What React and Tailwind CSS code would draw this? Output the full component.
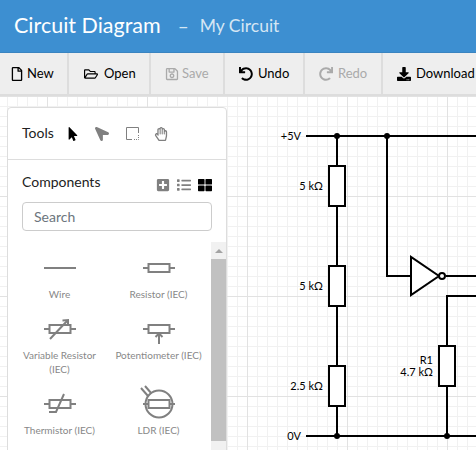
import { FaRegFile, FaRegFolderOpen, FaRegSave, FaUndo, FaRedo, FaDownload, FaMousePointer, FaLocationArrow, FaRegHandPaper, FaPlusSquare, FaList, FaThLarge } from 'react-icons/fa'

const buttons = [
  { label: 'New', icon: FaRegFile, w: 'w-[69px] pl-[10px] gap-[3px]' },
  { label: 'Open', icon: FaRegFolderOpen, w: 'w-[82px] pl-[15px] gap-[6px]' },
  { label: 'Save', icon: FaRegSave, w: 'w-[74px] pl-[14px] gap-[3px]', off: true },
  { label: 'Undo', icon: FaUndo, w: 'w-[80px] pl-[14px] gap-[5px]' },
  { label: 'Redo', icon: FaRedo, w: 'w-[78px] pl-[14px] gap-[5px]', off: true },
  { label: 'Download', icon: FaDownload, w: 'w-[93px] pl-[14px] gap-[5px]', last: true },
]

function Symbol({ children }) {
  return (
    <svg width="48" height="40" viewBox="-24 -20 48 40" fill="none" stroke="#808080" strokeWidth="2">
      {children}
    </svg>
  )
}

const Body = () => (
  <>
    <path d="M-16 0H-10.5M10.5 0H16" />
    <rect x="-10.5" y="-4" width="21" height="8" />
  </>
)

const items = [
  { name: 'Wire', draw: <path d="M-16 0H16" /> },
  { name: 'Resistor (IEC)', draw: <Body /> },
  {
    name: 'Variable Resistor (IEC)',
    draw: (
      <>
        <Body />
        <path d="M-10 10L7 -8" />
        <path d="M2.5 -8.5L8 -9L8 -3.5" />
      </>
    ),
  },
  {
    name: 'Potentiometer (IEC)',
    draw: (
      <>
        <Body />
        <path d="M0 5V15M-3.5 8L0 4.5L3.5 8" />
      </>
    ),
  },
  {
    name: 'Thermistor (IEC)',
    draw: (
      <>
        <Body />
        <path d="M-11 8H-4L4 -10" />
      </>
    ),
  },
  {
    name: 'LDR (IEC)',
    draw: (
      <>
        <Body />
        <circle cx="0" cy="0" r="13.5" />
        <path d="M-11 -8L-18 -16M-7.5 -10.5L-14 -18" />
      </>
    ),
  },
]

function Wires() {
  return (
    <svg className="absolute inset-0" width="476" height="354" viewBox="0 96 476 354" fill="none">
      <defs>
        <pattern id="minor" x="7" y="96" width="10" height="10" patternUnits="userSpaceOnUse">
          <path d="M0.5 0V10M0 0.5H10" stroke="#f1f1f1" strokeWidth="1" />
        </pattern>
        <pattern id="major" x="47" y="96" width="100" height="100" patternUnits="userSpaceOnUse">
          <path d="M0.5 0V100M0 0.5H100" stroke="#e2e2e2" strokeWidth="1" />
        </pattern>
      </defs>
      <rect x="0" y="96" width="476" height="354" fill="url(#minor)" />
      <rect x="0" y="96" width="476" height="354" fill="url(#major)" />
      <g stroke="#000000" strokeWidth="2">
        <path d="M306 136H476M306 436H476" />
        <path d="M337 136V166M337 206V266M337 306V366M337 406V436" />
        <rect x="329" y="166" width="16" height="40" fill="#ffffff" />
        <rect x="329" y="266" width="16" height="40" fill="#ffffff" />
        <rect x="329" y="366" width="16" height="40" fill="#ffffff" />
        <path d="M387 136V276H411M446 276H476" />
        <path d="M411 257V295L439 276Z" fill="#ffffff" />
        <circle cx="442" cy="276" r="3" fill="#ffffff" />
        <path d="M476 296H447V346M447 386V436" />
        <rect x="439" y="346" width="16" height="40" fill="#ffffff" />
      </g>
      <g fill="#000000">
        <circle cx="337" cy="136" r="3" />
        <circle cx="387" cy="136" r="3" />
        <circle cx="337" cy="436" r="3" />
        <circle cx="447" cy="436" r="3" />
      </g>
      <g fill="#000000" fontSize="11" textAnchor="end" fontFamily="Lato, sans-serif">
        <text x="301" y="140">+5V</text>
        <text x="301" y="440">0V</text>
        <text x="323" y="190">5 kΩ</text>
        <text x="323" y="290">5 kΩ</text>
        <text x="323" y="390">2.5 kΩ</text>
        <text x="433" y="364">R1</text>
        <text x="433" y="376">4.7 kΩ</text>
      </g>
    </svg>
  )
}

export default function App() {
  return (
    <div className="h-[450px] w-[476px] overflow-hidden bg-white font-['Lato',sans-serif] text-black">
      <header className="flex h-[53px] items-center border-b border-[#3a84c0] bg-[#3d8fd1] pl-[14px] text-white">
        <h1 className="text-[21.5px] leading-none">Circuit Diagram</h1>
        <span className="ml-[17px] text-[19px] text-[#d5e6f4]">–</span>
        <span className="ml-[11px] text-[17.5px] text-[#d5e6f4]">My Circuit</span>
      </header>

      <div className="flex h-[43px] border-b-2 border-[#dddddd] bg-[#eeeeee] text-[13px]">
        {buttons.map(b => {
          const Icon = b.icon
          return (
            <div
              key={b.label}
              className={`flex shrink-0 items-center ${b.w} ${b.last ? '' : 'border-r-2 border-[#dddddd]'} ${b.off ? 'text-[#aaaaaa]' : ''}`}
            >
              <Icon className="text-[14px]" />
              {b.label}
            </div>
          )
        })}
      </div>

      <main className="relative h-[354px] pt-[11px]">
        <Wires />
        <aside className="relative ml-[7px] w-[220px] rounded border border-[#dddddd] bg-white">
          <div className="flex h-[52px] items-center border-b border-[#dddddd] pl-[14px]">
            <span className="pb-[2px] text-[14px] text-[#222222]">Tools</span>
            <FaMousePointer className="ml-[12px] text-[14px] text-black" />
            <FaLocationArrow className="ml-[15px] -rotate-90 text-[14px] text-[#808080]" />
            <svg className="ml-[17px]" width="13" height="13" viewBox="0 0 13 13" fill="none" stroke="#808080">
              <path d="M12.5 6V0.5H0.5V12.5H6" />
              <path d="M12.5 8V12.5H8" strokeDasharray="1 1" />
            </svg>
            <FaRegHandPaper className="ml-[15px] text-[14px] text-[#808080]" />
          </div>

          <div className="px-[14px] pt-[12px]">
            <div className="flex h-[18px] items-center justify-between">
              <span className="text-[14px] text-[#222222]">Components</span>
              <div className="mt-[8px] flex items-center gap-[7px]">
                <FaPlusSquare className="text-[14px] text-[#808080]" />
                <FaList className="text-[14px] text-[#808080]" />
                <FaThLarge className="text-[14px] text-black" />
              </div>
            </div>
            <div className="mt-[12px] flex h-[29px] w-[190px] items-center rounded border border-[#cccccc] pl-[11px] text-[14px] text-[#6c757d]">
              Search
            </div>
          </div>

          <div className="mt-[11px] flex h-[220px]">
            <div className="grid w-[203px] grid-cols-[99px_99px] content-start gap-y-[8px] pl-[2px] pt-[6px]">
              {items.map(it => (
                <div key={it.name} className="flex flex-col items-center">
                  <Symbol>{it.draw}</Symbol>
                  <span className="-mt-px w-[90px] text-center text-[10px] leading-[14px] text-[#888888]">{it.name}</span>
                </div>
              ))}
            </div>
            <div className="flex w-[15px] flex-col items-center bg-[#f1f1f1]">
              <div className="mt-[7px] h-0 w-0 border-x-[4px] border-b-[4px] border-x-transparent border-b-[#a3a3a3]" />
              <div className="mt-[6px] h-[182px] w-full bg-[#c1c1c1]" />
            </div>
          </div>
        </aside>
      </main>
    </div>
  )
}
